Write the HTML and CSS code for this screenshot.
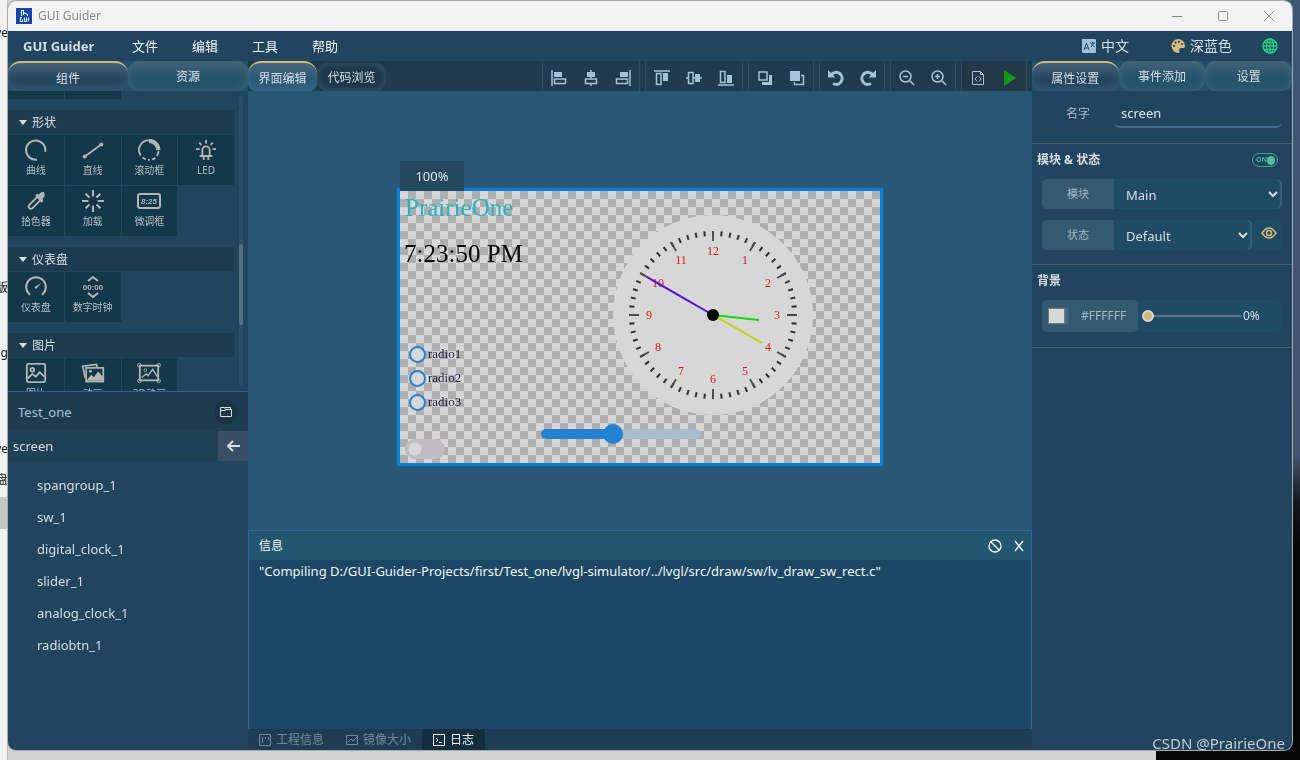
FILE: index.html
```html
<!DOCTYPE html>
<html lang="zh">
<head>
<meta charset="utf-8">
<title>GUI Guider</title>
<link rel="stylesheet" href="styles.css">
</head>
<body>
<svg class="defs" aria-hidden="true">
  <defs>
    <symbol id="i-arc" viewBox="0 0 24 24"><path d="M22 14A10.500 10.500 0 1 0 13 22.500" fill="none" stroke="currentColor" stroke-width="2.200"/></symbol>
    <symbol id="i-line" viewBox="0 0 24 24"><path d="M3 19 21 6" fill="none" stroke="currentColor" stroke-width="2"/><circle cx="3" cy="19" r="2.200" fill="currentColor"/><circle cx="21" cy="6" r="2.200" fill="currentColor"/></symbol>
    <symbol id="i-roll" viewBox="0 0 24 24"><path d="M12 1.500A10.500 10.500 0 0 0 3 18" fill="none" stroke="currentColor" stroke-width="2"/><path d="M5 20a10.500 10.500 0 0 0 16-2q1-2 1.500-5" fill="none" stroke="currentColor" stroke-width="2" stroke-dasharray="4 2.500 2 2.500 4 2.500 20"/><path d="M12 2A10.200 10.200 0 0 1 22.200 12" fill="none" stroke="currentColor" stroke-width="4.500"/></symbol>
    <symbol id="i-led" viewBox="0 0 24 24"><path d="M8 18v-6a4 4 0 0 1 8 0v6M5 18.500h14M9.500 19v4M14.500 19v4M12 1v4M4.500 4 7 6.500M19.500 4 17 6.500M1 11h4M19 11h4" fill="none" stroke="currentColor" stroke-width="2"/></symbol>
    <symbol id="i-pick" viewBox="0 0 24 24"><path d="m14 7-9.500 9.500a2.500 2.500 0 0 0 3.500 3.500l9.500-9.500" fill="none" stroke="currentColor" stroke-width="2"/><path d="m11 6 2-2 2 1 2-2q3-2 4 0t0 5l-2 1 1 3-2 2z" fill="currentColor"/></symbol>
    <symbol id="i-load" viewBox="0 0 24 24"><path d="M12 0v7M12 17v7M0 12h7M17 12h7M4 4l4.200 4.200M15.800 15.800 20 20M4 20l4.200-4.200M15.800 8.200 20 4" fill="none" stroke="currentColor" stroke-width="2.300"/></symbol>
    <symbol id="i-gauge" viewBox="0 0 24 24"><path d="M5.500 20.500A10.700 10.700 0 1 1 18.500 20.500" fill="none" stroke="currentColor" stroke-width="2.200"/><path d="m10.500 12 7-4.500-5 6.500q-2 0-2-2z" fill="currentColor"/></symbol>
    <symbol id="i-img" viewBox="0 0 24 24"><rect x="2" y="2" width="20" height="20" rx="2" fill="none" stroke="currentColor" stroke-width="2"/><circle cx="8" cy="8.500" r="2" fill="none" stroke="currentColor" stroke-width="2"/><path d="m3 18 5-5 4 3 4-5 5 5" fill="none" stroke="currentColor" stroke-width="2"/></symbol>
    <symbol id="i-imgs" viewBox="0 0 28 24"><path d="M5 18 2 4l16-2 1 3" fill="none" stroke="currentColor" stroke-width="2"/><rect x="6" y="6" width="20" height="16" fill="none" stroke="currentColor" stroke-width="2"/><circle cx="11" cy="10" r="1.700" fill="currentColor"/><path d="m7 20 5-6 3 3 5-7 6 7v4H7z" fill="currentColor"/></symbol>
    <symbol id="i-img3" viewBox="0 0 28 24"><rect x="4" y="4" width="20" height="16" fill="none" stroke="currentColor" stroke-width="2"/><circle cx="3.500" cy="3.500" r="2" fill="none" stroke="currentColor"/><circle cx="24.500" cy="3.500" r="2" fill="none" stroke="currentColor"/><circle cx="3.500" cy="20.500" r="2" fill="none" stroke="currentColor"/><circle cx="24.500" cy="20.500" r="2" fill="none" stroke="currentColor"/><circle cx="10" cy="9" r="1.500" fill="none" stroke="currentColor"/><path d="m6 17 5-4 2 2 5-7 5 8" fill="none" stroke="currentColor" stroke-width="1.500"/></symbol>
  </defs>
</svg>
<div class="backdrop" aria-hidden="true">
  <span class="frag f1">ve</span><span class="frag f2">f版</span><span class="frag f3">ng</span><span class="frag f4">ve</span><span class="frag f5">盘</span>
  <span class="edge"></span><span class="night"></span>
</div>
<div class="window">
  <header class="titlebar">
    <svg class="logo" viewBox="0 0 16 16"><rect width="16" height="16" fill="#1845a8"/><path d="M5.500 8V2.500h2V7M7.500 4.500l4 2V8M6 9.500H4.500v4h2v-2M8.500 9.500v4h2v-4M12.500 9.500v4" fill="none" stroke="#e8edf8" stroke-width="1.100"/></svg>
    <h1 class="title">GUI Guider</h1>
    <button class="winbtn" aria-label="Minimize"><svg viewBox="0 0 12 12"><path d="M1 6.500h10"/></svg></button>
    <button class="winbtn" aria-label="Maximize"><svg viewBox="0 0 12 12"><rect x="1.500" y="1.500" width="9" height="9" rx="1"/></svg></button>
    <button class="winbtn" aria-label="Close"><svg viewBox="0 0 12 12"><path d="m1 1 10 10M11 1 1 11"/></svg></button>
  </header>
  <nav class="menubar">
    <strong class="brand">GUI Guider</strong>
    <button class="menu">文件</button><button class="menu">编辑</button><button class="menu">工具</button><button class="menu">帮助</button>
    <span class="spacer"></span>
    <button class="tool-link lang"><svg viewBox="0 0 14 14"><rect width="14" height="14" rx="1" fill="#9cc3da"/><path d="m2 11 2.500-7L7 11M3 9h3M8 4h5M10.500 3v1M9 8l3-4M9.500 5l3 3" fill="none" stroke="#24506f"/></svg>中文</button>
    <button class="tool-link theme"><svg viewBox="0 0 14 14"><path d="M7 0a7 7 0 1 0 1 14q1-1 0-3 0-2 2-2h3q1 0 1-2a7 7 0 0 0-7-7z" fill="#d3bd79"/><g fill="#21455e"><circle cx="3" cy="7" r="1.100"/><circle cx="4.500" cy="3.700" r="1.100"/><circle cx="8" cy="2.800" r="1.100"/><circle cx="11" cy="5" r="1.100"/></g></svg>深蓝色</button>
    <button class="globe" aria-label="Web"><svg viewBox="0 0 16 16" fill="none" stroke="#27cf83" stroke-width="1.300"><circle cx="8" cy="8" r="7"/><ellipse cx="8" cy="8" rx="3.500" ry="7"/><path d="M8 1v14M1 8h14M2 4.500h12M2 11.500h12"/></svg></button>
  </nav>
  <main class="workspace">
    <aside class="left">
      <div class="tabs"><button class="tab active">组件</button><button class="tab">资源</button></div>
      <div class="components">
        <div class="palette">
          <div class="tiles cut"><span></span><span></span></div>
          <h2 class="group">形状</h2>
          <div class="tiles">
            <button class="tile"><svg><use href="#i-arc"/></svg>曲线</button>
            <button class="tile"><svg><use href="#i-line"/></svg>直线</button>
            <button class="tile"><svg><use href="#i-roll"/></svg>滚动框</button>
            <button class="tile"><svg><use href="#i-led"/></svg>LED</button>
            <button class="tile"><svg><use href="#i-pick"/></svg>拾色器</button>
            <button class="tile"><svg><use href="#i-load"/></svg>加载</button>
            <button class="tile"><svg viewBox="0 0 24 22"><rect x="1" y="4" width="22" height="14" rx="2" fill="none" stroke="currentColor" stroke-width="2"/><text x="12" y="14" class="seg">8:25</text></svg>微调框</button>
          </div>
          <h2 class="group">仪表盘</h2>
          <div class="tiles">
            <button class="tile"><svg><use href="#i-gauge"/></svg>仪表盘</button>
            <button class="tile"><svg viewBox="0 0 24 22"><path d="m7 5 5-4 5 4M7 17l5 4 5-4" fill="none" stroke="currentColor" stroke-width="2"/><text x="12" y="14" class="seg zero">00:00</text></svg>数字时钟</button>
          </div>
          <h2 class="group">图片</h2>
          <div class="tiles">
            <button class="tile"><svg><use href="#i-img"/></svg>图片</button>
            <button class="tile"><svg><use href="#i-imgs"/></svg>动画</button>
            <button class="tile"><svg class="wide"><use href="#i-img3"/></svg>3D动画</button>
          </div>
        </div>
        <div class="scroll"><div class="thumb"></div></div>
      </div>
      <section class="project">
        <header class="project-head">Test_one<button class="folder" aria-label="Open folder"><svg viewBox="0 0 12 12" fill="none" stroke="currentColor"><path d="M.500 1.500h4l1 2h6v7H.500zM5 1.500h5.500v2M.500 4.500h5l1-1"/></svg></button></header>
        <div class="screen-row">screen<button class="back" aria-label="Back"><svg viewBox="0 0 14 12" fill="none" stroke="currentColor" stroke-width="2"><path d="M14 6H2M7 1 2 6l5 5"/></svg></button></div>
        <ul class="tree"><li>spangroup_1</li><li>sw_1</li><li>digital_clock_1</li><li>slider_1</li><li>analog_clock_1</li><li>radiobtn_1</li></ul>
      </section>
    </aside>

    <section class="center">
      <div class="strip">
        <button class="tab view active">界面编辑</button><button class="tab view code">代码浏览</button>
        <span class="spacer"></span>
        <div class="toolbar">
          <div class="tgroup">
            <button aria-label="Align left"><svg viewBox="0 0 16 16"><path d="M1 0v16" class="o"/><path d="M3 2h8v5H3z"/><path d="M3.500 9h11v4.500h-11z" class="o"/></svg></button>
            <button aria-label="Align center"><svg viewBox="0 0 16 16"><path d="M8 0v16" class="o"/><path d="M4 2h8v5H4z"/><path d="M2.500 9h11v4.500h-11z" class="box"/></svg></button>
            <button aria-label="Align right"><svg viewBox="0 0 16 16"><path d="M15 0v16" class="o"/><path d="M5 2h8v5H5z"/><path d="M1.500 9h11v4.500h-11z" class="o"/></svg></button>
          </div>
          <div class="tgroup">
            <button aria-label="Align top"><svg viewBox="0 0 16 16"><path d="M0 1h16" class="o"/><path d="M9 3h5v8H9z"/><path d="M2.500 3.500H7v11H2.500z" class="o"/></svg></button>
            <button aria-label="Align middle"><svg viewBox="0 0 16 16"><path d="M0 8h16" class="o"/><path d="M9 4h5v8H9z"/><path d="M2.500 2.500H7v11H2.500z" class="box"/></svg></button>
            <button aria-label="Align bottom"><svg viewBox="0 0 16 16"><path d="M0 15h16" class="o"/><path d="M9 5h5v8H9z"/><path d="M2.500 1.500H7v11H2.500z" class="o"/></svg></button>
          </div>
          <div class="tgroup">
            <button aria-label="Send to back"><svg viewBox="0 0 16 16"><path d="M2 2h8v8H2z" class="o"/><path d="M12 5h3v10H5v-3h7z"/></svg></button>
            <button aria-label="Bring to front"><svg viewBox="0 0 16 16"><path d="M1 1h10v10H1z"/><path d="M12 5.500h2.500v9h-9V12" class="o"/></svg></button>
          </div>
          <div class="tgroup">
            <button aria-label="Undo"><svg viewBox="0 0 16 16"><path d="M3.500 4.500a6 6 0 1 1 1.500 9" class="o heavy"/><path d="M0 0v7.500h7.500z"/></svg></button>
            <button aria-label="Redo"><svg viewBox="0 0 16 16"><path d="M12.500 4.500a6 6 0 1 0-1.500 9" class="o heavy"/><path d="M16 0v7.500H8.500z"/></svg></button>
          </div>
          <div class="tgroup">
            <button aria-label="Zoom out"><svg viewBox="0 0 16 16"><path d="m11 11 4 4M4 6.500h5M12 6.500a5.500 5.500 0 1 1-11 0 5.500 5.500 0 0 1 11 0" class="o"/></svg></button>
            <button aria-label="Zoom in"><svg viewBox="0 0 16 16"><path d="m11 11 4 4M4 6.500h5M6.500 4v5M12 6.500a5.500 5.500 0 1 1-11 0 5.500 5.500 0 0 1 11 0" class="o"/></svg></button>
          </div>
          <div class="tgroup run">
            <button aria-label="Generate code"><svg viewBox="0 0 16 16"><path d="M2.500 1.500h8l3 3v10h-11zM10.500 1.500v3h3M7 6.500l-2 2.500 2 2.500M9 6.500l2 2.500-2 2.500" class="o thin"/></svg></button>
            <button aria-label="Run"><svg viewBox="0 0 16 16"><path d="m2 0 12 8-12 8z" class="play"/></svg></button>
          </div>
        </div>
      </div>
      <div class="stage">
        <div class="artboard">
          <span class="zoom">100%</span>
          <div class="surface">
            <span class="w brandtext">PrairieOne</span>
            <span class="w time">7:23:50 PM</span>
            <div class="w radios">
              <label><input type="radio" name="r">radio1</label>
              <label><input type="radio" name="r">radio2</label>
              <label><input type="radio" name="r">radio3</label>
            </div>
            <input class="w switch" type="checkbox" aria-label="sw_1">
            <input class="w range" type="range" min="0" max="100" value="44" aria-label="slider_1">
            <svg class="w clock" viewBox="-100 -100 200 200">
              <circle r="100" fill="#d7d7d7"/>
              <circle r="81.500" fill="none" stroke="#333" stroke-width="5" pathLength="600" stroke-dasharray="2.400 7.600" stroke-dashoffset="1.200"/>
              <circle r="79" fill="none" stroke="#4c4c4c" stroke-width="10" pathLength="600" stroke-dasharray="2.400 47.600" stroke-dashoffset="1.200"/>
              <g class="nums">
                <text x="0" y="-60">12</text><text x="32" y="-51">1</text><text x="55" y="-28">2</text><text x="64" y="4">3</text><text x="55" y="36">4</text><text x="32" y="60">5</text><text x="0" y="68">6</text><text x="-32" y="60">7</text><text x="-55" y="36">8</text><text x="-64" y="4">9</text><text x="-55" y="-28">10</text><text x="-32" y="-51">11</text>
              </g>
              <g stroke-width="2"><path d="M0 0 46 5" stroke="#0ddc0d"/><path d="m0 0 49 28" stroke="#c0d40c"/><path d="m0 0-66-38" stroke="#5a0bd8"/></g>
              <circle r="6" fill="#050505"/>
            </svg>
          </div>
        </div>
      </div>
      <section class="messages">
        <header class="msg-head">信息<span class="spacer"></span>
          <button aria-label="Clear"><svg viewBox="0 0 14 14"><circle cx="7" cy="7" r="6"/><path d="m3 3 8 8"/></svg></button>
          <button aria-label="Close"><svg viewBox="0 0 14 14"><path d="m3 2 8 10M11 2 3 12"/></svg></button>
        </header>
        <p class="log">"Compiling D:/GUI-Guider-Projects/first/Test_one/lvgl-simulator/../lvgl/src/draw/sw/lv_draw_sw_rect.c"</p>
      </section>
      <nav class="bottom">
        <button><svg viewBox="0 0 12 12"><path d="M.500.500h11v11H.500zM3.500 3v6M6.500 3v2M9.500 3v3"/></svg>工程信息</button>
        <button><svg viewBox="0 0 12 12"><path d="M.500 1.500h11v9H.500zM2 8l3-3 2 2 4-4"/></svg>镜像大小</button>
        <button class="on"><svg viewBox="0 0 12 12"><path d="M.500.500h11v11H.500zM3 4l2 2-2 2M6 8.500h3"/></svg>日志</button>
      </nav>
    </section>

    <aside class="right">
      <div class="tabs"><button class="tab active">属性设置</button><button class="tab">事件添加</button><button class="tab">设置</button></div>
      <div class="sect name"><label for="nm">名字</label><input id="nm" type="text" value="screen"></div>
      <section class="sect">
        <div class="sect-head"><h2>模块 &amp; 状态</h2><label class="on-toggle"><input type="checkbox" checked aria-label="模块 &amp; 状态"><span>ON</span></label></div>
        <div class="field"><label for="mod">模块</label><select id="mod"><option>Main</option></select></div>
        <div class="field"><label for="st">状态</label><select id="st"><option>Default</option></select>
          <button class="eye" aria-label="Preview"><svg viewBox="0 0 16 12" fill="none" stroke="currentColor" stroke-width="1.500"><path d="M1 6q7-10 14 0-7 10-14 0z"/><circle cx="8" cy="6" r="2.500"/></svg></button></div>
      </section>
      <section class="sect bg">
        <div class="sect-head"><h2>背景</h2></div>
        <div class="field color"><div class="hex"><button class="swatch" aria-label="Pick color"></button><span>#FFFFFF</span></div>
          <input type="range" value="0" aria-label="Opacity"><output>0%</output></div>
      </section>
    </aside>
  </main>
</div>
<div class="watermark">CSDN @PrairieOne</div>
</body>
</html>
```
FILE: styles.css
```css
* { box-sizing: border-box; }
body { margin: 0; height: 100vh; overflow: hidden; display: flex; flex-direction: column; background: #e4e4e4; font: 13px/20px "Noto Sans", "Noto Sans CJK SC", sans-serif; color: #d9dde0; }
button, input, select { font: inherit; color: inherit; border: 0; background: none; padding: 0; margin: 0; }
h1, h2, p, ul { margin: 0; padding: 0; font-size: inherit; }
svg { display: block; flex: none; }
.defs { display: none; }
.spacer { flex: 1; }

.backdrop { position: fixed; inset: 0; background: linear-gradient(90deg, #f2f2f2 0 7px, #bdbdbd 7px 8px, #d2d2d2 8px); color: #111; font-size: 12px; line-height: 16px; }
.frag { position: absolute; right: calc(100% - 8px); white-space: nowrap; }
.f1 { top: 25px; } .f2 { top: 280px; } .f3 { top: 345px; } .f4 { top: 441px; } .f5 { top: 472px; }
.edge { position: absolute; left: 0; top: 497px; width: 8px; height: 32px; background: #c6c6c6; }
.night { position: absolute; right: 0; top: 0; bottom: 0; width: 144px; background: linear-gradient(#3c5575 0, #43536d 60%, #15181f 66%, #050505 72%); }

.window { position: relative; flex: 1; min-height: 0; margin: 1px 8px 10px; display: flex; flex-direction: column; border-radius: 8px; overflow: hidden; background: #21455e; box-shadow: 0 0 0 1px #aaa9ad; }
.titlebar { height: 30px; flex: none; display: flex; align-items: center; background: #f3f3f3; color: #8a8a8a; font-size: 12px; padding-left: 8px; }
.logo { width: 16px; height: 16px; }
.title { flex: 1; margin-left: 6px; font-weight: 400; }
.winbtn { width: 46px; height: 30px; display: grid; place-items: center; }
.winbtn svg { width: 12px; fill: none; stroke: #8a8a8a; }
.menubar { height: 30px; flex: none; display: flex; align-items: center; padding-right: 14px; }
.brand { width: 107px; padding-left: 15px; white-space: nowrap; }
.menu { width: 60px; color: #f1f4f6; }
.menu:hover { background: #2c5875; }
.tool-link { display: flex; align-items: center; gap: 5px; font-size: 14px; }
.tool-link svg { width: 14px; height: 14px; }
.lang { margin-right: 42px; }
.theme { margin-right: 30px; }
.globe svg { width: 16px; }

.workspace { flex: 1; min-height: 0; display: grid; grid-template-columns: 240px minmax(0, 1fr) 260px; }
.tabs { display: flex; height: 30px; flex: none; background: #215269; }
.tab { flex: 1; padding-top: 2px; font-size: 12px; border-radius: 11px; background: linear-gradient(#436276, #24546b 55%, #21536a); box-shadow: inset 0 0 8px #44677a; }
.tab.active { padding-top: 3px; border-top: 2px solid #d0b878; background: linear-gradient(#46627a, #22445c 60%); box-shadow: inset 0 -4px 8px #335a74; border-radius: 13px 13px 8px 8px; }

.left { display: flex; flex-direction: column; min-height: 0; }
.components { height: 300px; flex: none; display: flex; overflow: hidden; }
.palette { width: 226px; }
.group { display: flex; align-items: center; gap: 5px; height: 24px; margin: 11px 0 1px; padding: 1px 0 0 11px; background: #1e3c50; font-size: 12px; font-weight: 400; }
.group::before { content: ""; border: 4px solid transparent; border-top: 5px solid #d9dde0; border-bottom: 0; }
.tiles { display: grid; grid-template-columns: repeat(4, 1fr); gap: 1px; grid-auto-rows: 50px; }
.cut { grid-auto-rows: 8px; }
.cut span, .tile { background: #12384a; }
.tile { display: flex; flex-direction: column; align-items: center; gap: 2px; padding-top: 4px; font-size: 10px; line-height: 15px; color: #b5bdc1; }
.tile:hover { background: #1b4a60; }
.tile svg { width: 24px; height: 22px; color: #b4b4b2; }
.tile .wide { width: 28px; }
.seg { font: italic bold 8px "Liberation Sans", sans-serif; fill: currentColor; text-anchor: middle; }
.zero { font-style: normal; }
.scroll { width: 4px; margin: 5px 0 5px 5px; background: #2b4d65; border-radius: 2px; }
.thumb { height: 81px; margin-top: 148px; background: #53707f; border-radius: 2px; }
.project { flex: 1; border-top: 1px solid #2f6590; }
.project-head { display: flex; align-items: center; justify-content: space-between; height: 39px; padding: 0 10px; background: #1e3c50; color: #a9c0cf; }
.folder { width: 24px; height: 24px; border-radius: 50%; background: #1b3547; display: grid; place-items: center; color: #d5dde2; }
.folder svg { width: 12px; }
.screen-row { display: flex; align-items: center; justify-content: space-between; height: 30px; padding-left: 5px; background: #1e4156; }
.back { width: 30px; height: 30px; background: #3a4f66; display: grid; place-items: center; }
.back svg { width: 14px; }
.tree { list-style: none; padding: 8px 0 0 29px; line-height: 32px; }

.center { display: flex; flex-direction: column; min-width: 0; min-height: 0; background: #285874; }
.strip { display: flex; height: 30px; flex: none; background: #1e3c50; }
.tab.view { flex: 0 0 69px; }
.view.active { background: linear-gradient(#49657c, #2a5876 60%); box-shadow: inset 0 -4px 8px #37698b; }
.tab.code { margin-top: 2px; background: #1d384b; box-shadow: inset 0 0 8px #3e5869; }
.toolbar { display: flex; gap: 5px; padding-right: 5px; }
.tgroup { display: flex; border: solid #2c4d61; border-width: 0 1px; }
.tgroup button { width: 32px; display: grid; place-items: center; padding-top: 4px; }
.tgroup svg { width: 16px; height: 16px; fill: #a3c4d8; overflow: visible; }
.tgroup .o { fill: none; stroke: #a3c4d8; stroke-width: 1.5; }
.tgroup .box { fill: #1e3c50; stroke: #a3c4d8; stroke-width: 1.5; }
.tgroup .thin { stroke-width: 1; }
.tgroup .heavy { stroke-width: 3; }
.tgroup .play { fill: #149914; }
.run { background: #243948; }
.stage { flex: 1; min-height: 0; display: flex; justify-content: center; align-items: flex-start; padding-top: 97px; }
.artboard { position: relative; border: 3px solid #0c7cd8; outline: 1px solid #1d628e; }
.zoom { position: absolute; left: 0; top: -30px; width: 64px; height: 30px; display: grid; place-items: center; background: #23475ce8; color: #e4e6e8; }
.surface { position: relative; width: 480px; height: 272px; background: repeating-conic-gradient(#aeaeae 0 25%, #d7d7d7 0 50%) 0 0 / 16px 16px; font-family: "Liberation Serif", serif; }
.w { position: absolute; }
.brandtext { left: 5px; top: 7px; font-size: 25px; color: #2ab3c0; }
.time { left: 4px; top: 53px; font-size: 25px; color: #080808; }
.radios { left: 9px; top: 151px; }
.radios label { display: flex; align-items: center; gap: 2px; height: 24px; font-size: 13px; color: #1b1b45; }
.radios input { appearance: none; width: 17px; height: 17px; border: 2px solid #2581d1; border-radius: 50%; background: #d7d7d7; }
.switch { appearance: none; left: 5px; top: 248px; width: 40px; height: 20px; border-radius: 10px; background: radial-gradient(circle at 10px 10px, #d7d7d7 6px, #bfbdc3 7px); }
.range { appearance: none; left: 141px; top: 233px; width: 160px; height: 20px; }
.range::-webkit-slider-runnable-track { height: 10px; border-radius: 5px; background: linear-gradient(90deg, #2581d1 45%, #a5bdd3e0 0); }
.range::-webkit-slider-thumb { appearance: none; width: 20px; height: 20px; margin-top: -5px; border-radius: 50%; background: #2581d1; }
.clock { left: 213px; top: 24px; width: 200px; height: 200px; }
.nums { font-size: 12px; fill: #dc1717; text-anchor: middle; }

.messages { height: 199px; flex: none; border: 1px solid #2f6590; border-bottom: 0; background: #1d4865; color: #f2f5f6; }
.msg-head { display: flex; align-items: center; gap: 10px; height: 29px; padding: 0 5px 0 10px; background: #23576f; font-size: 12px; }
.msg-head svg { width: 14px; fill: none; stroke: currentColor; stroke-width: 1.3; }
.log { padding: 1px 10px; }
.bottom { height: 21px; flex: none; display: flex; background: #1c3d54; font-size: 12px; color: #728a99; }
.bottom button { display: flex; align-items: center; gap: 5px; padding: 0 11px; }
.bottom svg { width: 12px; fill: none; stroke: currentColor; }
.bottom .on { background: #122e3f; color: #f0f3f5; }

.right { min-height: 0; }
.sect { border-bottom: 1px solid #476273; padding: 6px 10px 14px 5px; }
.sect.name { display: flex; align-items: center; gap: 24px; height: 53px; padding: 0 10px 6px 34px; font-size: 12px; color: #aeb9c1; }
.name input { flex: 1; min-width: 0; height: 28px; padding-left: 7px; font-size: 13px; color: #dfe3e6; border-bottom: 2px solid #3b6f8c; border-radius: 6px; }
.sect-head { display: flex; justify-content: space-between; align-items: center; height: 20px; padding-right: 4px; font-size: 12px; }
.on-toggle { display: flex; align-items: center; justify-content: space-between; width: 26px; height: 14px; padding: 0 2px 0 3px; border: 1px solid #3caa8b; border-radius: 7px; font-size: 7px; line-height: 12px; font-weight: 700; color: #3fb594; }
.on-toggle input { appearance: none; order: 2; width: 9px; height: 9px; border-radius: 50%; background: #52c09c; }
.field { display: flex; align-items: center; height: 30px; margin: 9px 0 0 5px; border-radius: 5px; background: #204b65; overflow: hidden; }
.field > label { width: 72px; line-height: 30px; background: #345a72; text-align: center; font-size: 11px; color: #a5b5bf; }
.field select { flex: 1; min-width: 0; height: 30px; appearance: none; padding: 2px 0 0 12px; border-radius: 5px; box-shadow: inset -3px 0 2px -1px #346580; background: url("data:image/svg+xml,%3Csvg xmlns='http://www.w3.org/2000/svg' width='10' height='7'%3E%3Cpath d='m1 1 4 4 4-4' fill='none' stroke='%23dddddd' stroke-width='2'/%3E%3C/svg%3E") right 4px center no-repeat; }
.eye { width: 30px; display: grid; place-items: center; color: #d0b878; padding: 0 0 4px 4px; }
.eye svg { width: 16px; }
.sect .field option { background: #204b65; }
.field + .field { margin-top: 11px; }
.bg { padding-bottom: 15px; }
.field.color { height: 32px; font-size: 12px; }
.hex { display: flex; align-items: center; gap: 16px; width: 96px; height: 32px; background: #345a72; border-radius: 5px; padding-left: 6px; color: #a9b6be; font-size: 12px; }
.swatch { width: 17px; height: 16px; background: #d7d7d7; border: 1px solid #777; box-shadow: 3px 0 2px #467087; }
.color input { appearance: none; width: 99px; margin: 0 2px 0 4px; height: 12px; background: linear-gradient(#5b7585, #5b7585) center / 100% 2px no-repeat; }
.color input::-webkit-slider-thumb { appearance: none; width: 12px; height: 12px; border-radius: 50%; background: #d0b878; border: 2px solid #d7d7d7; }
.watermark { position: fixed; right: 15px; bottom: 7px; font-size: 15px; color: #c5cbd0; white-space: nowrap; }
```
